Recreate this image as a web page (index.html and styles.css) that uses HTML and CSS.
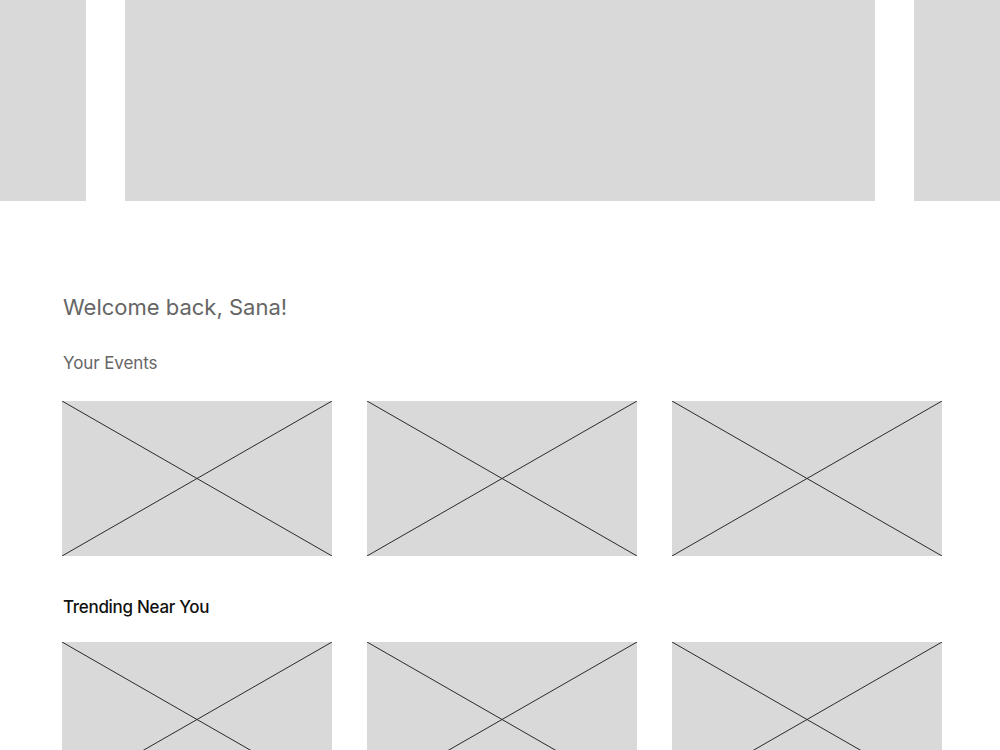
FILE: index.html
```html
<!DOCTYPE html>
<html lang="en">
<head>
  <meta charset="UTF-8" />
  <meta name="viewport" content="width=device-width, initial-scale=1.0"/>
  <title>Home</title>
  <link rel="stylesheet" href="styles.css">
</head>
<body>
  <div class="carousel">
    <div class="slide"></div>
    <div class="slide"></div>
    <div class="slide"></div>
  </div>

  <main class="content">
    <h1 class="welcome">Welcome back, Sana!</h1>

    <h2 class="section-title">Your Events</h2>
    <div class="cards">
      <div class="card">
        <svg viewBox="0 0 100 100" preserveAspectRatio="none"><line x1="0" y1="0" x2="100" y2="100"/><line x1="100" y1="0" x2="0" y2="100"/></svg>
      </div>
      <div class="card">
        <svg viewBox="0 0 100 100" preserveAspectRatio="none"><line x1="0" y1="0" x2="100" y2="100"/><line x1="100" y1="0" x2="0" y2="100"/></svg>
      </div>
      <div class="card">
        <svg viewBox="0 0 100 100" preserveAspectRatio="none"><line x1="0" y1="0" x2="100" y2="100"/><line x1="100" y1="0" x2="0" y2="100"/></svg>
      </div>
    </div>

    <h2 class="section-title dark">Trending Near You</h2>
    <div class="cards trending">
      <div class="card">
        <svg viewBox="0 0 100 100" preserveAspectRatio="none"><line x1="0" y1="0" x2="100" y2="100"/><line x1="100" y1="0" x2="0" y2="100"/></svg>
      </div>
      <div class="card">
        <svg viewBox="0 0 100 100" preserveAspectRatio="none"><line x1="0" y1="0" x2="100" y2="100"/><line x1="100" y1="0" x2="0" y2="100"/></svg>
      </div>
      <div class="card">
        <svg viewBox="0 0 100 100" preserveAspectRatio="none"><line x1="0" y1="0" x2="100" y2="100"/><line x1="100" y1="0" x2="0" y2="100"/></svg>
      </div>
    </div>
  </main>
</body>
</html>
```

FILE: styles.css
```css
body {
  font-family: Inter, 'Noto Sans', sans-serif;
  background-color: #ffffff;
  margin: 0;
  overflow: hidden;
}

.carousel {
  display: flex;
  justify-content: center;
  gap: 39px;
  height: 201px;
  overflow: hidden;
}

.slide {
  flex: 0 0 750px;
  background-color: #d9d9d9;
}

.content {
  padding: 0 58px 0 62px;
}

.welcome {
  font-size: 22px;
  font-weight: 400;
  color: #666666;
  line-height: 28px;
  margin: 92px 0 0 1px;
}

.section-title {
  font-size: 17px;
  font-weight: 400;
  color: #666666;
  line-height: 22px;
  margin: 31px 0 0 1px;
  letter-spacing: -0.1px;
}

.section-title.dark {
  color: #111111;
  font-weight: 500;
  margin-top: 40px;
  letter-spacing: -0.3px;
}

.cards {
  display: grid;
  grid-template-columns: repeat(3, 270px);
  gap: 35px;
  margin-top: 27px;
}

.cards.trending {
  margin-top: 24px;
}

.card {
  height: 155px;
  background-color: #d9d9d9;
}

.card svg {
  display: block;
  width: 100%;
  height: 100%;
}

.card line {
  stroke: #2a2a2a;
  stroke-width: 1;
  vector-effect: non-scaling-stroke;
}
```
